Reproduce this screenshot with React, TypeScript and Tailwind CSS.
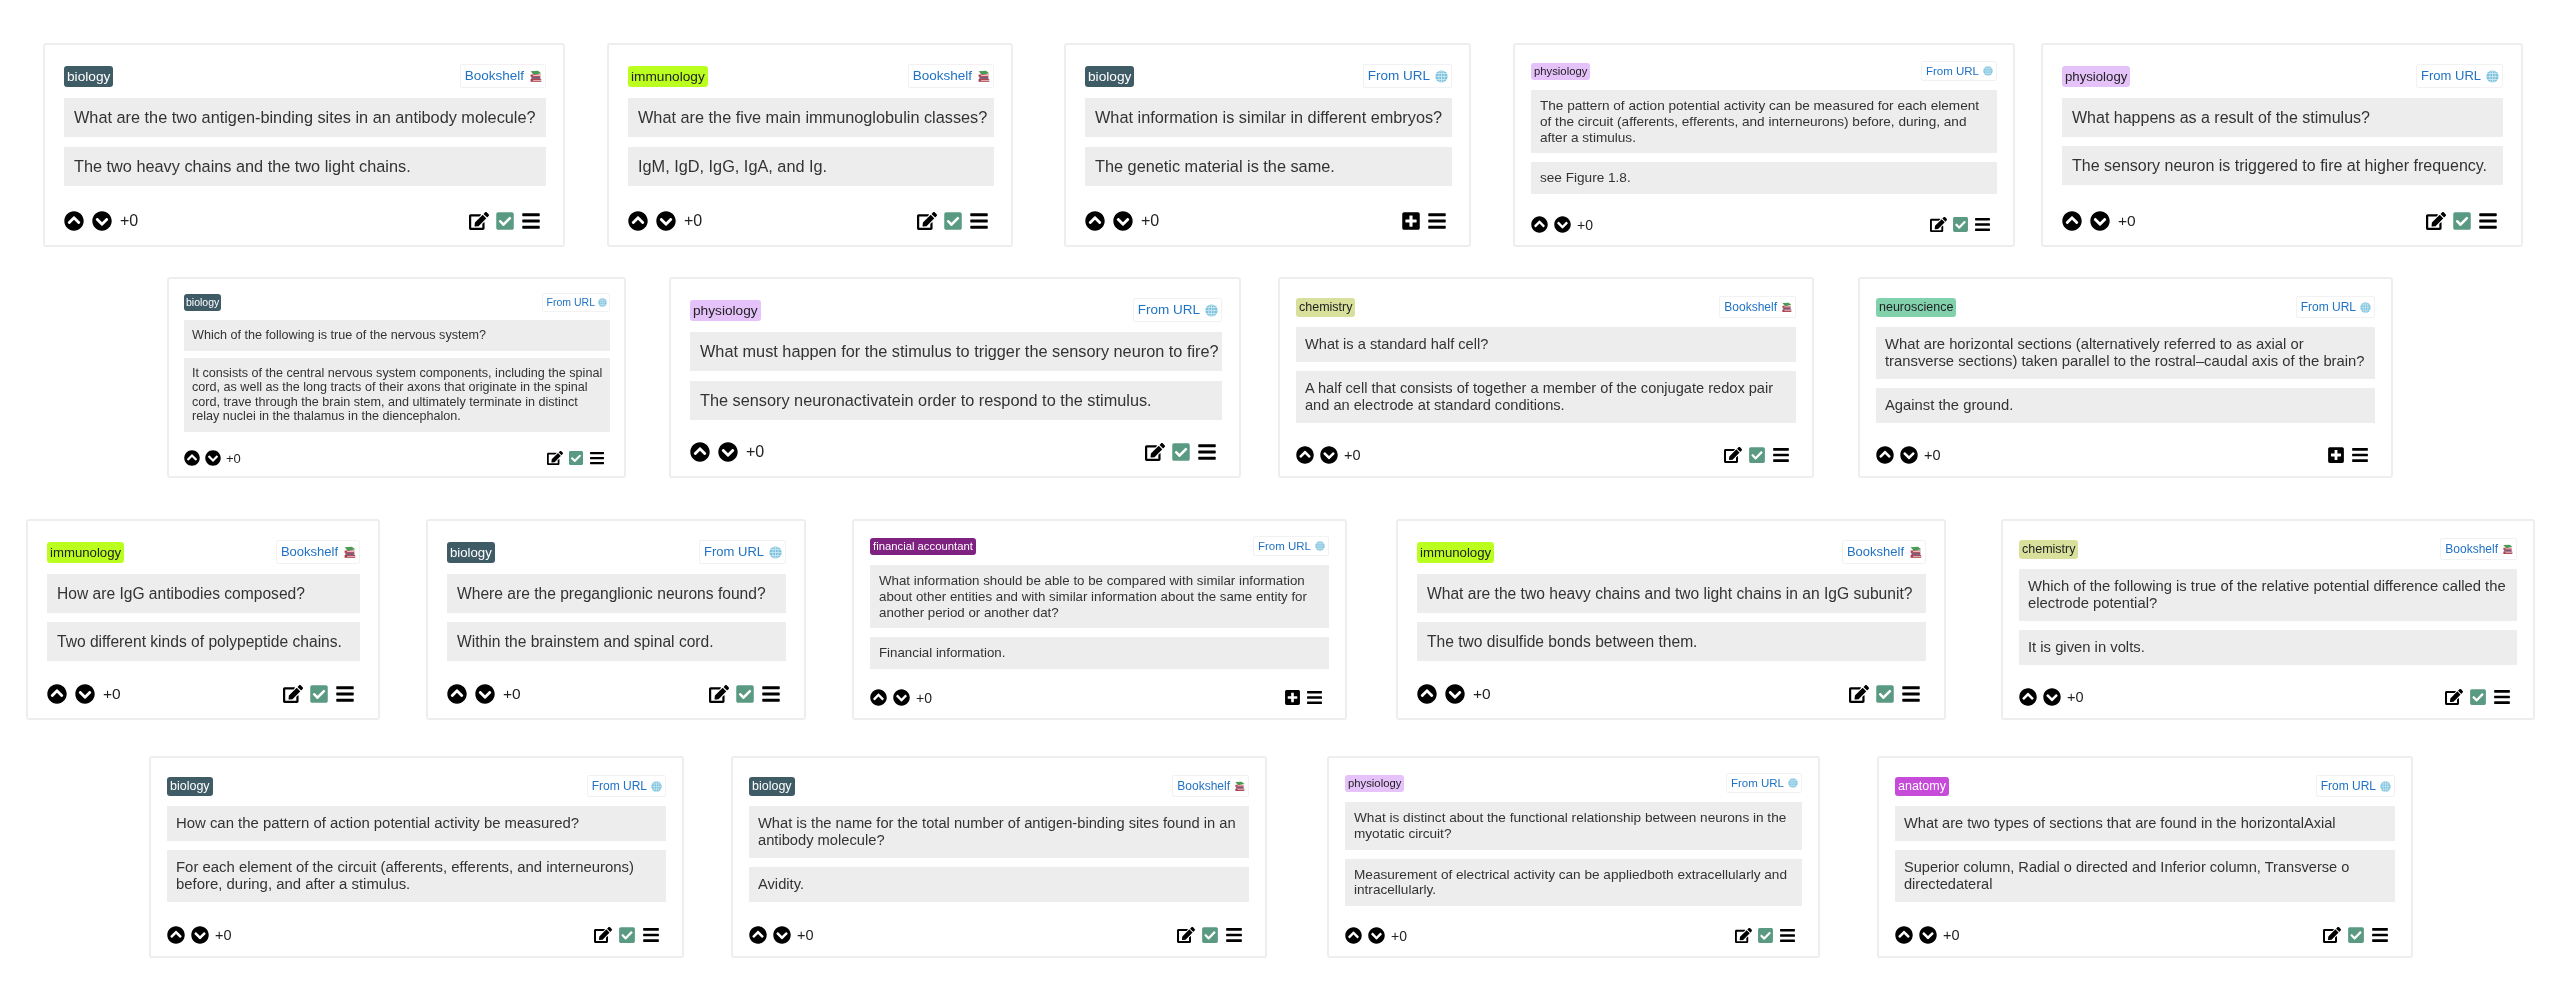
import { FaBars, FaCheckSquare, FaChevronCircleDown, FaChevronCircleUp, FaEdit, FaPlusSquare } from "react-icons/fa";

type Size = "lg" | "mlg" | "md" | "mds" | "sm";

type CardData = {
  tag: string;
  tagClass: string;
  source: "Bookshelf" | "From URL";
  q: string;
  a: string;
  size: Size;
  box: string; // width + left margin
  text?: string; // font size override
  qbox?: string; // box padding override
  pad?: string; // card padding override
  added?: boolean;
};

const BIO = "bg-[#3f5b66] text-white";
const IMM = "bg-[#bbff1f] text-[#222]";
const PHY = "bg-[#e5c2fa] text-[#222]";
const CHE = "bg-[#d8e09c] text-[#222]";
const NEU = "bg-[#82d1ad] text-[#222]";
const FIN = "bg-[#7e2180] text-white";
const ANA = "bg-[#c64bd9] text-white";

const SIZES: Record<Size, { pad: string; tag: string; src: string; head: string; text: string; qbox: string; gap: string; icon: number; vote: string; tools: string }> = {
  lg: { pad: "pl-[19px] pr-[17px] pt-[19px] pb-[14px]", tag: "text-[13.7px] leading-[21px] px-[3px]", src: "text-[13.5px] leading-[22px] pl-1 pr-[3px] gap-[5px]", head: "mb-[10px]", text: "text-[16.3px] leading-[19px]", qbox: "pl-[10px] pr-[2px] py-[10px]", gap: "gap-[10px]", icon: 20, vote: "gap-2 text-[16px]", tools: "gap-[6px] pr-[5px]" },
  mlg: { pad: "pl-[19px] pr-[18px] pt-[19px] pb-[14px]", tag: "text-[13.2px] leading-[21px] px-[3px]", src: "text-[13px] leading-[22px] pl-1 pr-[3px] gap-[5px]", head: "mb-[10px]", text: "text-[15.6px] leading-[19px]", qbox: "pl-[10px] pr-[2px] py-[10px]", gap: "gap-[9px]", icon: 20, vote: "gap-2 text-[15.5px]", tools: "gap-[6px] pr-[5px]" },
  md: { pad: "px-[16px] pt-[17px] pb-[12px]", tag: "text-[12.5px] leading-[19px] px-[3px]", src: "text-[12px] leading-[20px] pl-1 pr-[3px] gap-[4px]", head: "mb-[9px]", text: "text-[14.6px] leading-[17px]", qbox: "pl-[9px] pr-[4px] py-[9px]", gap: "gap-[9px]", icon: 18, vote: "gap-[6px] text-[14.5px]", tools: "gap-[6px] pr-[6px]" },
  mds: { pad: "px-[16px] pt-[15px] pb-[12px]", tag: "text-[11.3px] leading-[17px] px-[3px]", src: "text-[11.5px] leading-[18px] pl-1 pr-[3px] gap-[4px]", head: "mb-[9px]", text: "text-[13.3px] leading-[15.8px]", qbox: "pl-[9px] pr-[4px] py-[8px]", gap: "gap-[9px]", icon: 17, vote: "gap-[6px] text-[14px]", tools: "gap-[5px] pr-[6px]" },
  sm: { pad: "pl-[15px] pr-[14px] pt-[14px] pb-[10px]", tag: "text-[10.5px] leading-[17px] px-[2px]", src: "text-[10.5px] leading-[17px] pl-1 pr-[2px] gap-[3px]", head: "mb-[8px]", text: "text-[12.6px] leading-[14.5px]", qbox: "pl-[8px] pr-[4px] py-[8px]", gap: "gap-[7px]", icon: 16, vote: "gap-[5px] text-[13px]", tools: "gap-[5px] pr-[5px]" },
};

const rows: { cls: string; cards: CardData[] }[] = [
  {
    cls: "pt-[43px] h-[247px]",
    cards: [
      { tag: "biology", tagClass: BIO, source: "Bookshelf", q: "What are the two antigen-binding sites in an antibody molecule?", a: "The two heavy chains and the two light chains.", size: "lg", box: "w-[522px] ml-[43px]" },
      { tag: "immunology", tagClass: IMM, source: "Bookshelf", q: "What are the five main immunoglobulin classes?", a: "IgM, IgD, IgG, IgA, and Ig.", size: "lg", box: "w-[406px] ml-[42px]" },
      { tag: "biology", tagClass: BIO, source: "From URL", q: "What information is similar in different embryos?", a: "The genetic material is the same.", size: "lg", box: "w-[407px] ml-[51px]", added: false },
      { tag: "physiology", tagClass: PHY, source: "From URL", q: "The pattern of action potential activity can be measured for each element of the circuit (afferents, efferents, and interneurons) before, during, and after a stimulus.", a: "see Figure 1.8.", size: "mds", box: "w-[502px] ml-[42px]", text: "text-[13.6px] leading-[15.8px]", pad: "px-[16px] pt-[16px] pb-[12px]" },
      { tag: "physiology", tagClass: PHY, source: "From URL", q: "What happens as a result of the stimulus?", a: "The sensory neuron is triggered to fire at higher frequency.", size: "mlg", box: "w-[482px] ml-[26px]", text: "text-[16px] leading-[19px]" },
    ],
  },
  {
    cls: "mt-[30px] h-[201px]",
    cards: [
      { tag: "biology", tagClass: BIO, source: "From URL", q: "Which of the following is true of the nervous system?", a: "It consists of the central nervous system components, including the spinal cord, as well as the long tracts of their axons that originate in the spinal cord, trave through the brain stem, and ultimately terminate in distinct relay nuclei in the thalamus in the diencephalon.", size: "sm", box: "w-[459px] ml-[167px]" },
      { tag: "physiology", tagClass: PHY, source: "From URL", q: "What must happen for the stimulus to trigger the sensory neuron to fire?", a: "The sensory neuronactivatein order to respond to the stimulus.", size: "lg", box: "w-[572px] ml-[43px]" },
      { tag: "chemistry", tagClass: CHE, source: "Bookshelf", q: "What is a standard half cell?", a: "A half cell that consists of together a member of the conjugate redox pair and an electrode at standard conditions.", size: "md", box: "w-[536px] ml-[37px]" },
      { tag: "neuroscience", tagClass: NEU, source: "From URL", q: "What are horizontal sections (alternatively referred to as axial or\ntransverse sections) taken parallel to the rostral–caudal axis of the brain?", a: "Against the ground.", size: "md", box: "w-[535px] ml-[44px]", added: false, text: "text-[14.8px] leading-[17px]", qbox: "pl-[9px] pr-[2px] py-[9px] whitespace-pre-line" },
    ],
  },
  {
    cls: "mt-[41px] h-[201px]",
    cards: [
      { tag: "immunology", tagClass: IMM, source: "Bookshelf", q: "How are IgG antibodies composed?", a: "Two different kinds of polypeptide chains.", size: "mlg", box: "w-[354px] ml-[26px]" },
      { tag: "biology", tagClass: BIO, source: "From URL", q: "Where are the preganglionic neurons found?", a: "Within the brainstem and spinal cord.", size: "mlg", box: "w-[380px] ml-[46px]" },
      { tag: "financial accountant", tagClass: FIN, source: "From URL", q: "What information should be able to be compared with similar information about other entities and with similar information about the same entity for another period or another dat?", a: "Financial information.", size: "mds", box: "w-[495px] ml-[46px]", added: false },
      { tag: "immunology", tagClass: IMM, source: "Bookshelf", q: "What are the two heavy chains and two light chains in an IgG subunit?", a: "The two disulfide bonds between them.", size: "mlg", box: "w-[550px] ml-[49px]" },
      { tag: "chemistry", tagClass: CHE, source: "Bookshelf", q: "Which of the following is true of the relative potential difference called the electrode potential?", a: "It is given in volts.", size: "md", box: "w-[534px] ml-[55px]", text: "text-[14.8px] leading-[17px]" },
    ],
  },
  {
    cls: "mt-[36px] h-[202px]",
    cards: [
      { tag: "biology", tagClass: BIO, source: "From URL", q: "How can the pattern of action potential activity be measured?", a: "For each element of the circuit (afferents, efferents, and interneurons) before, during, and after a stimulus.", size: "md", box: "w-[535px] ml-[149px]", text: "text-[14.9px] leading-[17px]" },
      { tag: "biology", tagClass: BIO, source: "Bookshelf", q: "What is the name for the total number of antigen-binding sites found in an antibody molecule?", a: "Avidity.", size: "md", box: "w-[536px] ml-[47px]", text: "text-[14.7px] leading-[17px]" },
      { tag: "physiology", tagClass: PHY, source: "From URL", q: "What is distinct about the functional relationship between neurons in the myotatic circuit?", a: "Measurement of electrical activity can be appliedboth extracellularly and intracellularly.", size: "mds", box: "w-[493px] ml-[60px]", text: "text-[13.6px] leading-[15.8px]" },
      { tag: "anatomy", tagClass: ANA, source: "From URL", q: "What are two types of sections that are found in the horizontalAxial", a: "Superior column, Radial o directed and Inferior column, Transverse o directedateral", size: "md", box: "w-[536px] ml-[57px]" },
    ],
  },
];

function BooksIcon({ size }: { size: number }) {
  return (
    <svg width={size} height={size} viewBox="0 0 16 16" className="shrink-0">
      <path d="M2 1.5 11 1 15 4 6 6Z" fill="#4a9b55" />
      <path d="M2 5.5h12v3H2Z" fill="#b8404e" />
      <path d="M5 6.4h9v1H5Z" fill="#f2dfe0" />
      <path d="M3 8.5h11v2.5H3Z" fill="#7c5a78" />
      <path d="M2 11h13v3.5H2Z" fill="#a93a4a" />
      <path d="M5 12.2h10v1H5Z" fill="#eedcdc" />
    </svg>
  );
}

function GlobeIcon({ size }: { size: number }) {
  return (
    <svg width={size} height={size} viewBox="0 0 16 16" className="shrink-0">
      <circle cx="8" cy="8" r="7.5" fill="#7cc2dc" />
      <g fill="none" stroke="#d4ecf6" strokeWidth="0.9">
        <ellipse cx="8" cy="8" rx="3.4" ry="7.5" />
        <path d="M8 .5v15M.5 8h15M1.5 4.3h13M1.5 11.7h13" />
      </g>
    </svg>
  );
}

function Card({ c }: { c: CardData }) {
  const s = SIZES[c.size];
  const text = c.text ?? s.text;
  const qbox = c.qbox ?? s.qbox;
  const hasAdd = c.added === false;
  return (
    <div className={`${c.box} ${c.pad ?? s.pad} flex h-full shrink-0 flex-col rounded-[3px] border-2 border-[#eeeeee] bg-white`}>
      <div className={`${s.head} flex items-center justify-between`}>
        <span className={`${c.tagClass} ${s.tag} rounded-[3px]`}>{c.tag}</span>
        <span className={`${s.src} flex items-center rounded-[2px] border border-[#f2f2f2] text-[#1f72c4]`}>
          {c.source}
          {c.source === "Bookshelf" ? <BooksIcon size={s.icon - 7} /> : <GlobeIcon size={s.icon - 7} />}
        </span>
      </div>
      <div className={`${s.gap} flex flex-col text-[#333]`}>
        <div className={`${qbox} ${text} bg-[#ededed]`}>{c.q}</div>
        <div className={`${qbox} ${text} bg-[#ededed]`}>{c.a}</div>
      </div>
      <div className="mt-auto flex items-center justify-between text-black">
        <div className={`${s.vote} flex items-center leading-none`}>
          <FaChevronCircleUp size={s.icon} />
          <FaChevronCircleDown size={s.icon} />
          <span className="text-[#222]">+0</span>
        </div>
        <div className={`${s.tools} flex items-center`}>
          {hasAdd ? (
            <FaPlusSquare size={s.icon} />
          ) : (
            <>
              <FaEdit size={s.icon} />
              <FaCheckSquare size={s.icon} className="text-[#5a9a82]" />
            </>
          )}
          <FaBars size={s.icon} />
        </div>
      </div>
    </div>
  );
}

export default function App() {
  return (
    <div className="h-[1000px] w-[2560px] overflow-hidden bg-white blur-[0.4px] font-['Liberation_Sans',Arial,sans-serif]">
      {rows.map((row, i) => (
        <div key={i} className={`${row.cls} flex`}>
          {row.cards.map((c, j) => (
            <Card key={j} c={c} />
          ))}
        </div>
      ))}
    </div>
  );
}
